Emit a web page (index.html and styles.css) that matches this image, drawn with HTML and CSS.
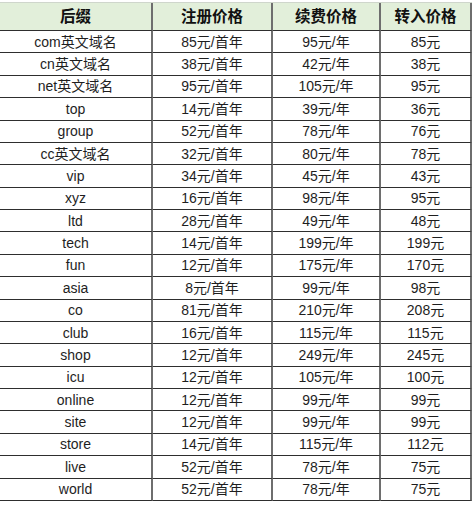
FILE: index.html
```html
<!DOCTYPE html>
<html lang="zh-CN">
<head>
<meta charset="utf-8">
<title>域名价格</title>
<link rel="stylesheet" href="styles.css">
</head>
<body>
<div class="sheet">
  <div class="cell head">后缀</div><div class="cell head">注册价格</div><div class="cell head">续费价格</div><div class="cell head">转入价格</div>
  <div class="cell">com英文域名</div><div class="cell">85元/首年</div><div class="cell">95元/年</div><div class="cell">85元</div>
  <div class="cell">cn英文域名</div><div class="cell">38元/首年</div><div class="cell">42元/年</div><div class="cell">38元</div>
  <div class="cell">net英文域名</div><div class="cell">95元/首年</div><div class="cell">105元/年</div><div class="cell">95元</div>
  <div class="cell">top</div><div class="cell">14元/首年</div><div class="cell">39元/年</div><div class="cell">36元</div>
  <div class="cell">group</div><div class="cell">52元/首年</div><div class="cell">78元/年</div><div class="cell">76元</div>
  <div class="cell">cc英文域名</div><div class="cell">32元/首年</div><div class="cell">80元/年</div><div class="cell">78元</div>
  <div class="cell">vip</div><div class="cell">34元/首年</div><div class="cell">45元/年</div><div class="cell">43元</div>
  <div class="cell">xyz</div><div class="cell">16元/首年</div><div class="cell">98元/年</div><div class="cell">95元</div>
  <div class="cell">ltd</div><div class="cell">28元/首年</div><div class="cell">49元/年</div><div class="cell">48元</div>
  <div class="cell">tech</div><div class="cell">14元/首年</div><div class="cell">199元/年</div><div class="cell">199元</div>
  <div class="cell">fun</div><div class="cell">12元/首年</div><div class="cell">175元/年</div><div class="cell">170元</div>
  <div class="cell">asia</div><div class="cell">8元/首年</div><div class="cell">99元/年</div><div class="cell">98元</div>
  <div class="cell">co</div><div class="cell">81元/首年</div><div class="cell">210元/年</div><div class="cell">208元</div>
  <div class="cell">club</div><div class="cell">16元/首年</div><div class="cell">115元/年</div><div class="cell">115元</div>
  <div class="cell">shop</div><div class="cell">12元/首年</div><div class="cell">249元/年</div><div class="cell">245元</div>
  <div class="cell">icu</div><div class="cell">12元/首年</div><div class="cell">105元/年</div><div class="cell">100元</div>
  <div class="cell">online</div><div class="cell">12元/首年</div><div class="cell">99元/年</div><div class="cell">99元</div>
  <div class="cell">site</div><div class="cell">12元/首年</div><div class="cell">99元/年</div><div class="cell">99元</div>
  <div class="cell">store</div><div class="cell">14元/首年</div><div class="cell">115元/年</div><div class="cell">112元</div>
  <div class="cell">live</div><div class="cell">52元/首年</div><div class="cell">78元/年</div><div class="cell">75元</div>
  <div class="cell">world</div><div class="cell">52元/首年</div><div class="cell">78元/年</div><div class="cell">75元</div>
</div>
</body>
</html>
```
FILE: styles.css
```css
html, body {
  margin: 0;
  padding: 0;
  background: #ffffff;
}
body {
  padding-top: 2px;
  font-family: "Liberation Sans", "Noto Sans CJK SC", sans-serif;
  color: #1e1e1e;
}
.sheet {
  display: grid;
  grid-template-columns: 153px 120px 108px 91px;
  grid-template-rows: 28px repeat(21, 22.38px);
  border-top: 1px solid #cfd6cc;
  width: 472px;
}
.cell {
  display: flex;
  align-items: center;
  justify-content: center;
  border-right: 2px solid #6e6e6e;
  border-bottom: 1px solid #2e2e2e;
  font-size: 14px;
  line-height: 1;
  white-space: nowrap;
}
.head {
  background: #e2efda;
  font-weight: bold;
  font-size: 15.5px;
  color: #111;
}
```
